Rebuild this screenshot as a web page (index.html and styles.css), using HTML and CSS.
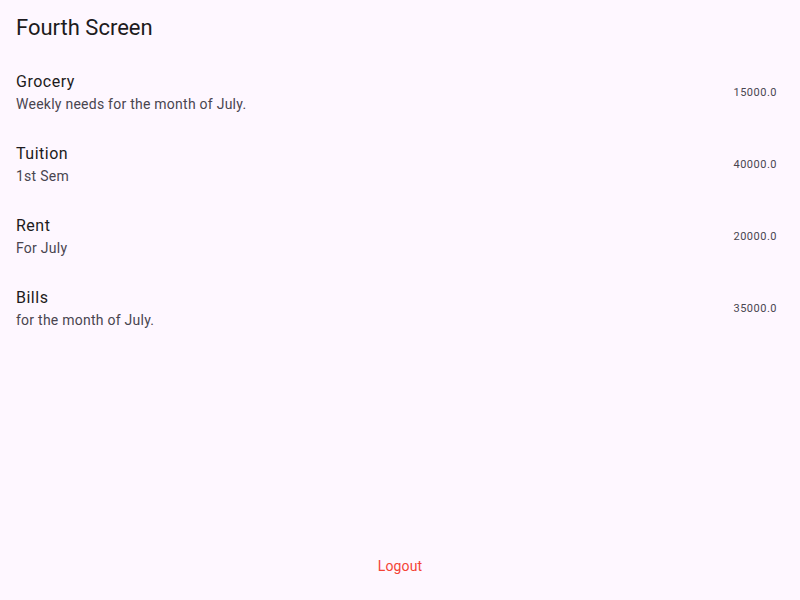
FILE: index.html
```html
<!DOCTYPE html>
<html>
<head>
<meta charset="utf-8">
<link rel="stylesheet" href="styles.css">
</head>
<body>
<div class="app">
  <header class="appbar"><h1 class="title">Fourth Screen</h1></header>
  <ul class="list">
    <li class="tile"><div class="texts"><div class="t">Grocery</div><div class="s">Weekly needs for the month of July.</div></div><div class="amt">15000.0</div></li>
    <li class="tile"><div class="texts"><div class="t">Tuition</div><div class="s">1st Sem</div></div><div class="amt">40000.0</div></li>
    <li class="tile"><div class="texts"><div class="t">Rent</div><div class="s">For July</div></div><div class="amt">20000.0</div></li>
    <li class="tile"><div class="texts"><div class="t">Bills</div><div class="s">for the month of July.</div></div><div class="amt">35000.0</div></li>
  </ul>
  <div class="footer"><button class="logout">Logout</button></div>
</div>
</body>
</html>
```
FILE: styles.css
```css
html, body { margin: 0; padding: 0; }
body { background: #FEF7FF; font-family: Roboto, "Noto Sans", sans-serif; color: #1D1B20; }
.app { height: 600px; display: flex; flex-direction: column; }
.appbar { height: 56px; display: flex; align-items: center; padding: 0 16px; }
.title { margin: 0; font-size: 22px; font-weight: 400; line-height: 28px; }
.list { list-style: none; margin: 0; padding: 0; flex: 1; }
.tile { height: 56px; padding: 8px 23px 8px 16px; display: flex; align-items: center; }
.texts { flex: 1; }
.t { font-size: 16px; line-height: 24px; letter-spacing: 0.5px; }
.s { font-size: 14px; line-height: 20px; letter-spacing: 0.25px; color: #49454F; }
.amt { font-size: 11px; line-height: 16px; letter-spacing: 0.5px; color: #49454F; margin-top: 2px; }
.footer { display: flex; justify-content: center; padding-bottom: 14px; }
.logout { background: none; border: 0; font-family: Roboto, sans-serif; font-size: 14px; letter-spacing: 0.1px; color: #F44336; height: 40px; padding: 0 12px; }
```
